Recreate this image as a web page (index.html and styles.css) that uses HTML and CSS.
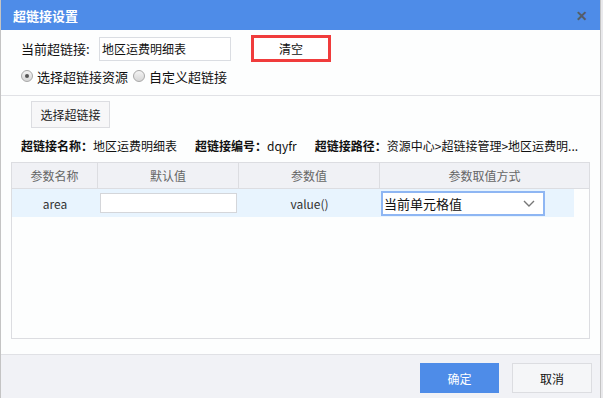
FILE: index.html
```html
<!DOCTYPE html>
<html lang="zh">
<head>
  <meta charset="UTF-8">
  <title>超链接设置</title>
  <link rel="stylesheet" href="styles.css">
</head>
<body>

<div class="dialog">
  <div class="dialog-title">
    <span>超链接设置</span>
    <span class="close">&#x2715;</span>
  </div>

  <div class="top">
    <div class="row">
      <label class="label">当前超链接:</label>
      <input class="text-input" type="text" value="地区运费明细表">
      <button class="clear-btn">清空</button>
    </div>
    <div class="row radios">
      <span class="radio checked"></span><span class="radio-text">选择超链接资源</span>
      <span class="radio"></span><span class="radio-text">自定义超链接</span>
    </div>
  </div>

  <div class="content">
    <button class="pick-btn">选择超链接</button>
    <div class="info">
      <b>超链接名称：</b><span>地区运费明细表</span>
      <b class="sp">超链接编号：</b><span>dqyfr</span>
      <b class="sp">超链接路径：</b><span>资源中心&gt;超链接管理&gt;地区运费明...</span>
    </div>

    <div class="grid">
      <div class="grid-head">
        <div class="cell">参数名称</div>
        <div class="cell">默认值</div>
        <div class="cell">参数值</div>
        <div class="cell last">参数取值方式</div>
      </div>
      <div class="grid-row">
        <div class="cell">area</div>
        <div class="cell"><input class="cell-input" type="text"></div>
        <div class="cell">value()</div>
        <div class="cell sel-cell">
          <div class="select">
            <span>当前单元格值</span>
            <svg width="12" height="7" viewBox="0 0 12 7"><path d="M1 1 L6 6 L11 1" fill="none" stroke="#777" stroke-width="1.4"/></svg>
          </div>
        </div>
      </div>
    </div>
  </div>

  <div class="footer">
    <button class="ok-btn">确定</button>
    <button class="cancel-btn">取消</button>
  </div>
</div>

</body>
</html>
```

FILE: styles.css
```css
*, *::before, *::after {
  box-sizing: border-box;
}

body {
  margin: 0;
  font-family: "Noto Sans CJK SC", "Noto Sans", sans-serif;
  font-size: 12px;
  color: #222;
  background: #e9e9ec;
}

.dialog {
  width: 601px;
  height: 398px;
  display: flex;
  flex-direction: column;
  background: #fdfefe;
  border-left: 1px solid #c4c4c4;
  border-right: 1px solid #c4c4c4;
}

.dialog-title {
  height: 30px;
  flex: none;
  display: flex;
  align-items: center;
  justify-content: space-between;
  padding: 0 12px 0 12px;
  background: #4e8ce8;
  color: #fff;
  font-size: 13px;
  font-weight: bold;
}

.close {
  color: #555c68;
  font-size: 14px;
  font-weight: bold;
}

.top {
  height: 66px;
  flex: none;
  padding: 5px 0 0 20px;
  border-bottom: 1px solid #e1e2e6;
}

.row {
  display: flex;
  align-items: center;
}

.label {
  width: 78px;
  font-size: 13px;
  color: #111;
}

.text-input {
  width: 132px;
  height: 24px;
  border: 1px solid #dadde2;
  padding: 0 2px;
  font-family: inherit;
  font-size: 12px;
  color: #111;
}

.clear-btn {
  margin-left: 20px;
  width: 80px;
  height: 27px;
  border: 3px solid #f03c3c;
  background: #fff;
  font-family: inherit;
  font-size: 12px;
  color: #111;
}

.radios {
  margin-top: 2px;
  height: 24px;
}

.radio {
  width: 12px;
  height: 12px;
  border-radius: 50%;
  border: 1px solid #a8a8a8;
  background: linear-gradient(#f4f4f4, #d6d6d6);
  margin-right: 4px;
  position: relative;
}

.radio.checked::after {
  content: "";
  position: absolute;
  left: 3px;
  top: 3px;
  width: 4px;
  height: 4px;
  border-radius: 50%;
  background: #555;
}

.radio-text {
  font-size: 13px;
  margin-right: 5px;
  color: #111;
}

.content {
  flex: 1;
  padding: 5px 10px 0 10px;
}

.pick-btn {
  margin-left: 20px;
  width: 79px;
  height: 27px;
  border: 1px solid #dcdde1;
  background: #f7f7f8;
  font-family: inherit;
  font-size: 12px;
  color: #222;
}

.info {
  height: 34px;
  display: flex;
  align-items: center;
  padding-left: 10px;
  white-space: nowrap;
  color: #111;
}

.info b {
  font-weight: bold;
}

.info .sp {
  margin-left: 18px;
}

.grid {
  height: 177px;
  border: 1px solid #dcdde1;
}

.grid-head, .grid-row {
  display: grid;
  grid-template-columns: 86px 141px 141px 1fr;
}

.grid-head {
  height: 26px;
  background: #f0f1f5;
  border-bottom: 1px solid #dcdde1;
  color: #666;
}

.grid-head .cell {
  border-right: 1px solid #dcdde1;
}

.grid-head .last {
  border-right: none;
}

.grid-row {
  width: 562px;
  grid-template-columns: 86px 141px 141px 194px;
  height: 28px;
  background: #e8f4fe;
  color: #333;
}

.cell {
  display: flex;
  align-items: center;
  justify-content: center;
}

.cell-input {
  width: 137px;
  height: 20px;
  border: 1px solid #d4d6da;
  background: #fff;
}

.sel-cell {
  justify-content: flex-start;
  padding-left: 1px;
}

.select {
  width: 164px;
  height: 25px;
  border: 2px solid #8eb6f3;
  background: #fff;
  display: flex;
  align-items: center;
  justify-content: space-between;
  padding: 0 8px 0 1px;
  font-size: 13px;
  color: #111;
}

.footer {
  height: 44px;
  flex: none;
  display: flex;
  justify-content: flex-end;
  align-items: flex-start;
  gap: 13px;
  padding: 8px 8px 0 0;
  background: #f1f2f6;
  border-top: 1px solid #e0e1e5;
}

.ok-btn, .cancel-btn {
  height: 30px;
  font-family: inherit;
  font-size: 12px;
}

.ok-btn {
  width: 79px;
  border: 1px solid #4e8ce8;
  background: #4e8ce8;
  color: #fff;
}

.cancel-btn {
  width: 80px;
  border: 1px solid #dcdde1;
  background: #f5f6f8;
  color: #111;
}
```
